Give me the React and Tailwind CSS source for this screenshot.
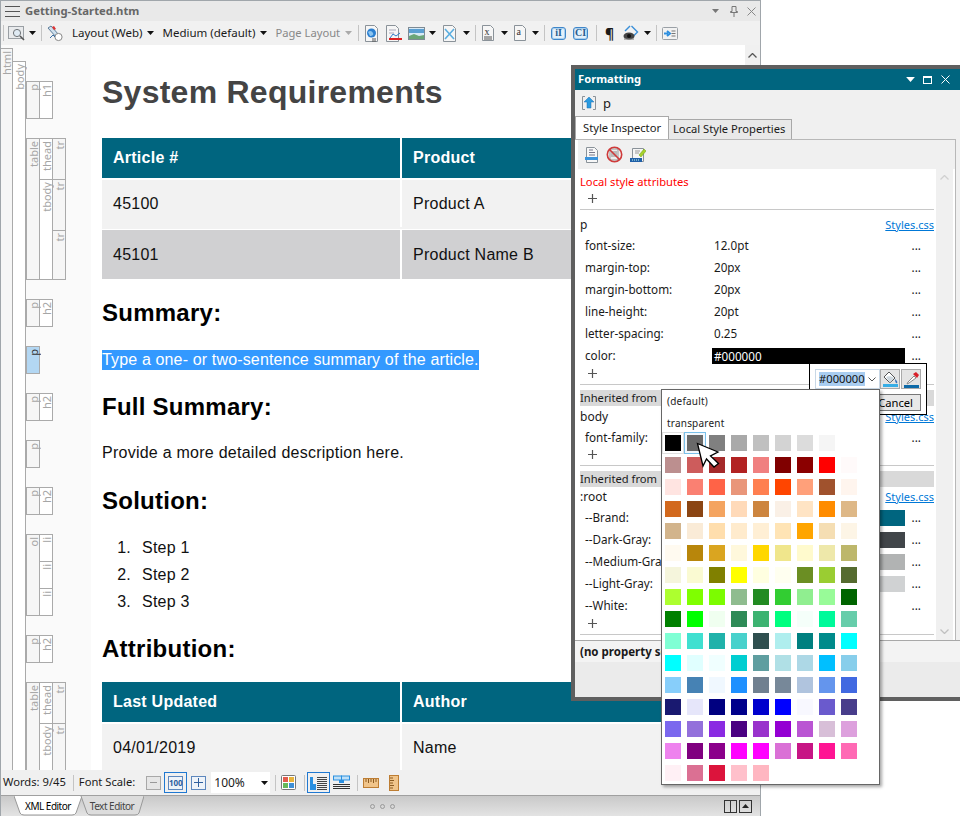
import React from "react";

const ui = "font-['Noto_Sans',sans-serif]";
const doc = "font-['Liberation_Sans',Arial,sans-serif]";

const swatches = [
  "#000000", "#696969", "#808080", "#a9a9a9", "#c0c0c0", "#d3d3d3", "#dcdcdc", "#f5f5f5", "#ffffff",
  "#bc8f8f", "#cd5c5c", "#a52a2a", "#b22222", "#f08080", "#800000", "#8b0000", "#ff0000", "#fffafa",
  "#ffe4e1", "#fa8072", "#ff6347", "#e9967a", "#ff7f50", "#ff4500", "#ffa07a", "#a0522d", "#fff5ee",
  "#d2691e", "#8b4513", "#f4a460", "#ffdab9", "#cd853f", "#faf0e6", "#ffe4c4", "#ff8c00", "#deb887",
  "#d2b48c", "#faebd7", "#ffdead", "#ffebcd", "#ffefd5", "#ffe4b5", "#ffa500", "#f5deb3", "#fdf5e6",
  "#fffaf0", "#b8860b", "#daa520", "#fff8dc", "#ffd700", "#f0e68c", "#fffacd", "#eee8aa", "#bdb76b",
  "#f5f5dc", "#fafad2", "#808000", "#ffff00", "#ffffe0", "#fffff0", "#6b8e23", "#9acd32", "#556b2f",
  "#adff2f", "#7fff00", "#7cfc00", "#8fbc8f", "#228b22", "#32cd32", "#90ee90", "#98fb98", "#006400",
  "#008000", "#00ff00", "#f0fff0", "#2e8b57", "#3cb371", "#00ff7f", "#f5fffa", "#00fa9a", "#66cdaa",
  "#7fffd4", "#40e0d0", "#20b2aa", "#48d1cc", "#2f4f4f", "#afeeee", "#008080", "#008b8b", "#00ffff",
  "#00ffff", "#e0ffff", "#f0ffff", "#00ced1", "#5f9ea0", "#b0e0e6", "#add8e6", "#00bfff", "#87ceeb",
  "#87cefa", "#4682b4", "#f0f8ff", "#1e90ff", "#708090", "#778899", "#b0c4de", "#6495ed", "#4169e1",
  "#191970", "#e6e6fa", "#000080", "#00008b", "#0000cd", "#0000ff", "#f8f8ff", "#6a5acd", "#483d8b",
  "#7b68ee", "#9370db", "#8a2be2", "#4b0082", "#9932cc", "#9400d3", "#ba55d3", "#d8bfd8", "#dda0dd",
  "#ee82ee", "#800080", "#8b008b", "#ff00ff", "#ff00ff", "#da70d6", "#c71585", "#ff1493", "#ff69b4",
  "#fff0f5", "#db7093", "#dc143c", "#ffc0cb", "#ffb6c1",
];

const Caret = ({ className = "", color = "#111" }) => (
  <svg width="7" height="4" viewBox="0 0 7 4" className={`shrink-0 ${className}`}>
    <path d="M0 0h7L3.5 4z" fill={color} />
  </svg>
);

const Sep = ({ className = "" }) => <div className={`w-px h-[16px] shrink-0 bg-[#c4c4c4] ${className}`} />;

const Paper = ({ children, w = 13, h = 17, stroke = "#8a9299" }) => (
  <svg width={w} height={h} viewBox={`0 0 ${w} ${h}`}>
    <path d={`M.5.5h${w - 4}l3 3v${h - 4}h-${w - 1}z`} fill="#f6f6f6" stroke={stroke} />
    {children}
  </svg>
);

// main toolbar icons
const PreviewIcon = () => (
  <svg width="17" height="15" viewBox="0 0 17 15">
    <rect x=".5" y=".5" width="15" height="12" fill="#e8eaec" stroke="#9a9fa4" />
    <circle cx="9" cy="7" r="3.6" fill="#dfeaf3" stroke="#6f7478" />
    <path d="M12 10l4 4" stroke="#555" strokeWidth="1.6" />
  </svg>
);
const WandIcon = () => (
  <svg width="17" height="17" viewBox="0 0 17 17">
    <path d="M1 3l3-2 8 9-3 2z" fill="#cfe0ee" stroke="#5d7d9a" />
    <path d="M5 2l2-1 2 3-2 1z" fill="#d33" />
    <circle cx="11.5" cy="12" r="3.6" fill="#fff" stroke="#888" />
    <path d="M3 13l3-3 2 2" stroke="#3b6fa5" fill="none" />
  </svg>
);
const GlobeDoc = () => (
  <svg width="14" height="17" viewBox="0 0 14 17">
    <path d="M.5.5h9l3 3v13H.5z" fill="#f6f6f6" stroke="#8a9299" />
    <circle cx="6.5" cy="8" r="4.5" fill="#2b7fd0" />
    <path d="M3 7c2-2 4-1 5 1s-1 3-3 3" fill="#8cc4ef" />
    <path d="M7 14h4m-4 2h4" stroke="#555" />
  </svg>
);
const ChartDoc = () => (
  <svg width="17" height="17" viewBox="0 0 17 17">
    <path d="M.5.5h9l3 3v13H.5z" fill="#f6f6f6" stroke="#8a9299" />
    <path d="M3 5h7M3 8h5" stroke="#aab" />
    <path d="M4 13l3-4 3 2 4-3" fill="none" stroke="#2f7bc8" />
    <path d="M3 14h13" stroke="#d22" strokeWidth="2" />
  </svg>
);
const ImageIcon = () => (
  <svg width="17" height="13" viewBox="0 0 17 13">
    <rect x=".5" y=".5" width="16" height="12" fill="#d6e9f6" stroke="#7d8a94" />
    <path d="M1 2h15v4H1z" fill="#5a9fd2" />
    <path d="M1 12V9l5-2 5 2 5-1v4z" fill="#6aa578" />
  </svg>
);
const BrokenImg = () => (
  <Paper>
    <path d="M2 4l9 10M11 4l-9 10" stroke="#5aaee0" strokeWidth="1.600" />
  </Paper>
);
const DocLetter = ({ t }) => (
  <svg width="12" height="16" viewBox="0 0 12 16">
    <path d="M.5.5h8l3 3v12H.5z" fill="#f6f6f6" stroke="#8a9299" />
    <text x="2.4" y="10" fontSize="10" fontFamily="'Liberation Serif',serif" fill="#333">{t}</text>
    {t === "x" && <path d="M2 12h8m-8 2h8" stroke="#555" />}
  </svg>
);
const BlueBox = ({ t }) => (
  <div className="w-[15px] h-[13px] rounded-[3px] border border-[#3f86c9] bg-[#e4f0fa] shadow-[inset_0_0_0_1px_#a9d0ef] flex items-center justify-center text-[10px] leading-none font-bold text-[#2a5d8f] font-['Liberation_Serif',serif]">
    {t}
  </div>
);
const EyeDiamond = () => (
  <svg width="16" height="17" viewBox="0 0 16 17">
    <path d="M8.5 1l6 6-4 4" fill="none" stroke="#3b8fd8" strokeWidth="1.4" />
    <path d="M7 1L2 6" fill="none" stroke="#3b8fd8" strokeWidth="1.4" />
    <ellipse cx="6" cy="11" rx="5.5" ry="3.6" fill="#444" />
    <circle cx="6" cy="11" r="2" fill="#111" />
    <path d="M1 14h10" stroke="#777" />
  </svg>
);
const ArrowList = () => (
  <svg width="16" height="13" viewBox="0 0 16 13">
    <rect x=".5" y=".5" width="15" height="12" rx="1" fill="#f2f2f2" stroke="#9aa0a6" />
    <path d="M2 6.5h4M5 4l3 2.5L5 9" fill="none" stroke="#2d8fe0" strokeWidth="2" />
    <path d="M9.5 4h4m-4 2.5h4M9.5 9h4" stroke="#777" />
  </svg>
);

// formatting panel icons
const UpIcon = () => (
  <svg width="14" height="15" viewBox="0 0 14 15">
    <path d="M3 .5H.5v13H3M11 .5h2.500v13H11" fill="none" stroke="#8a9299" />
    <path d="M7 1l5 5H9v6H5V6H2z" fill="#2a9be0" stroke="#1f6fb0" strokeWidth=".5" />
  </svg>
);
const SheetIcon = () => (
  <svg width="14" height="16" viewBox="0 0 14 16">
    <path d="M1.500.5h8l3 3v12h-11z" fill="#f7f7f7" stroke="#8a9299" />
    <path d="M4 3h4M4 5.500h6M4 8h6" stroke="#778" />
    <rect y="10" width="13" height="3" fill="#3a93dc" />
  </svg>
);
const NoIcon = () => (
  <svg width="17" height="17" viewBox="0 0 17 17">
    <path d="M4 3h8v11H4z" fill="#eee" stroke="#999" />
    <path d="M5 6h6M5 8h6M5 10h6" stroke="#888" />
    <circle cx="8.500" cy="8.500" r="7.200" fill="none" stroke="#cf3a3a" strokeWidth="1.600" />
    <path d="M3.500 3.500l10 10" stroke="#cf3a3a" strokeWidth="1.600" />
  </svg>
);
const EditIcon = () => (
  <svg width="16" height="16" viewBox="0 0 16 16">
    <path d="M2.500 1.500h11v13h-11z" fill="#f5f5f5" stroke="#8a9299" />
    <path d="M5 4h5M5 6h4" stroke="#999" />
    <path d="M9 8l5-6 2 2-5 6z" fill="#a7d22c" stroke="#6a9a12" strokeWidth=".5" />
    <rect y="11" width="12" height="4" fill="#1f5fa8" />
    <path d="M2 13h8" stroke="#cfe" strokeDasharray="1 1" />
  </svg>
);
const Plus = () => (
  <svg width="11" height="11" viewBox="0 0 11 11">
    <path d="M5.500 1v9M1 5.500h9" stroke="#555" strokeWidth="1.200" />
  </svg>
);
const PaintIcon = () => (
  <svg width="17" height="17" viewBox="0 0 17 17">
    <path d="M7 1l6 6-5 5-6-6z" fill="#fff" stroke="#555" />
    <path d="M4 6c2-1 6-1 8 1l-4 5z" fill="#cfd8df" />
    <path d="M13 8c2 2 3 3 2 4s-2-1-2-4z" fill="#3a74b8" />
    <rect x="1" y="13" width="15" height="3" fill="#38aee6" />
  </svg>
);
const DropperIcon = () => (
  <svg width="17" height="17" viewBox="0 0 17 17">
    <path d="M10 3l3-2 3 3-2 3z" fill="#d8202a" />
    <path d="M11 5l2 2-7 5-2 1 1-2z" fill="#fff" stroke="#8a8a8a" />
    <rect x="1" y="14" width="15" height="3" fill="#0e6aa8" />
  </svg>
);
const Cursor = () => (
  <svg width="25" height="26" viewBox="0 0 25 26" className="absolute left-[696px] top-[442px]">
    <path d="M1.500 1.500L22 10l-7.500 4 8 7.500-4.500 3.500-7.500-8-3.500 7z" fill="#fff" stroke="#000" strokeWidth="1.300" />
  </svg>
);

// status bar icons
const MiniBtn = ({ children, tone = "border-[#5d87bd]", fill = "bg-[#eef3f9]" }) => (
  <div className={`w-[15px] h-[14px] border ${tone} ${fill} flex items-center justify-center`}>{children}</div>
);
const PaletteIcon = () => (
  <svg width="15" height="15" viewBox="0 0 15 15">
    <rect x=".5" y=".5" width="14" height="14" rx="1" fill="#fff" stroke="#777" />
    <rect x="2" y="2" width="5" height="5" fill="#e25b4e" />
    <rect x="8" y="2" width="5" height="5" fill="#e8b33a" />
    <rect x="2" y="8" width="5" height="5" fill="#66b85a" />
    <rect x="8" y="8" width="5" height="5" fill="#3f8fd6" />
  </svg>
);
const LeftLayout = () => (
  <svg width="17" height="14" viewBox="0 0 17 14">
    <path d="M0 1h3v13H0z" fill="#2a8fe0" />
    <path d="M3 8h3v6H3z" fill="#2a8fe0" />
    <path d="M7 1.500h10M7 3.500h10M7 5.500h10M7 7.500h10M7 9.500h10M7 11.500h10M7 13.500h10" stroke="#444" />
  </svg>
);
const TopLayout = () => (
  <svg width="17" height="15" viewBox="0 0 17 15">
    <rect x=".5" y="1" width="8" height="4" fill="#bfe0f7" stroke="#2a8fe0" />
    <rect x="8.500" y="1" width="8" height="4" fill="#bfe0f7" stroke="#2a8fe0" />
    <path d="M6 5h5v3H6z" fill="#2a8fe0" />
    <path d="M0 9.500h17M0 11.500h17M0 13.500h17" stroke="#333" />
  </svg>
);
const RulerH = () => (
  <svg width="16" height="10" viewBox="0 0 16 10">
    <rect x=".5" y=".5" width="15" height="9" fill="#f0c48a" stroke="#bd7d33" />
    <path d="M3 1v3M5.500 1v4M8 1v3M10.500 1v4M13 1v3" stroke="#8a5a20" />
  </svg>
);
const RulerV = () => (
  <svg width="10" height="16" viewBox="0 0 10 16">
    <rect x=".5" y=".5" width="9" height="15" fill="#f0c48a" stroke="#bd7d33" />
    <path d="M1 3h3M1 5.500h4M1 8h3M1 10.500h4M1 13h3" stroke="#8a5a20" />
  </svg>
);

// element tree in the left gutter
const VLabel = ({ children, active }) => (
  <span className={`block self-start [writing-mode:vertical-rl] rotate-180 text-[11px] leading-[11px] mt-[2px] ${ui} ${active ? "text-[#333]" : "text-[#a6a6a6]"}`}>
    {children}
  </span>
);

const Tag = ({ label, h, kids, depth = 0, active }) => (
  <div className="flex">
    <div
      className={`w-[13px] shrink-0 flex justify-center border-r border-b border-[#aaaaaa] ${
        active ? "bg-[#b3d7f3]" : depth % 2 ? "bg-white" : "bg-[#f6f6f6]"
      } ${h || ""}`}
    >
      <VLabel active={active}>{label}</VLabel>
    </div>
    {kids && (
      <div className="flex flex-col">
        {kids.map((k, i) => (
          <Tag key={i} {...k} depth={depth + 1} />
        ))}
      </div>
    )}
  </div>
);

const Group = (props) => (
  <div className="self-start border-l border-t border-[#aaaaaa]">
    <Tag {...props} />
  </div>
);

const Gutter = () => (
  <div className="w-[90px] shrink-0 bg-[#fafafa] flex items-stretch pt-[3px] overflow-hidden">
    <div className="w-[12px] bg-[#f6f6f6] border-t border-r border-[#aaaaaa] flex justify-center shrink-0">
      <VLabel>html</VLabel>
    </div>
    <div className="flex flex-1 mt-[13px] min-h-0">
      <div className="w-[13px] bg-white border-t border-r border-[#aaaaaa] flex justify-center shrink-0">
        <VLabel>body</VLabel>
      </div>
      <div className="flex flex-col gap-[19px] pt-5">
        <Group label="p" kids={[{ label: "h1", h: "h-[37px]" }]} />
        <Group
          label="table"
          kids={[
            { label: "thead", kids: [{ label: "tr", h: "h-[41px]" }] },
            { label: "tbody", kids: [{ label: "tr", h: "h-[51px]" }, { label: "tr", h: "h-[49px]" }] },
          ]}
        />
        <Group label="p" kids={[{ label: "h2", h: "h-[27px]" }]} />
        <Group label="p" active h="h-[27px]" />
        <Group label="p" kids={[{ label: "h2", h: "h-[27px]" }]} />
        <Group label="p" h="h-[27px]" />
        <Group label="p" kids={[{ label: "h2", h: "h-[27px]" }]} />
        <Group label="ol" kids={[{ label: "li", h: "h-[27px]" }, { label: "li", h: "h-[27px]" }, { label: "li", h: "h-[27px]" }]} />
        <Group label="p" kids={[{ label: "h2", h: "h-[27px]" }]} />
        <Group
          label="table"
          kids={[
            { label: "thead", kids: [{ label: "tr", h: "h-[41px]" }] },
            { label: "tbody", kids: [{ label: "tr", h: "h-[60px]" }] },
          ]}
        />
      </div>
    </div>
  </div>
);

const HeadRow = ({ a, b }) => (
  <div className="flex w-[700px] h-10 mb-[2px] text-white font-bold text-[16px] bg-[#00657f]">
    <div className="w-[298px] shrink-0 pl-[11px] flex items-center">{a}</div>
    <div className="w-[2px] shrink-0 bg-white" />
    <div className="w-[400px] shrink-0 pl-[11px] flex items-center">{b}</div>
  </div>
);
const BodyRow = ({ a, b, tone }) => (
  <div className={`flex w-[700px] h-[49px] mb-px text-[16px] text-[#111] ${tone}`}>
    <div className="w-[298px] shrink-0 pl-[11px] flex items-center">{a}</div>
    <div className="w-[2px] shrink-0 bg-white" />
    <div className="w-[400px] shrink-0 pl-[11px] flex items-center">{b}</div>
  </div>
);

const H2 = ({ className, children }) => (
  <h2 className={`h-[28px] leading-[28px] text-[24px] font-bold text-black tracking-[0.25px] ${className}`}>{children}</h2>
);

const Step = ({ n }) => (
  <li className="h-[27px] leading-[27px] flex">
    <span className="w-[29px] text-right mr-[11px]">{n}.</span>
    Step {n}
  </li>
);

const Document = () => (
  <div className={`flex-1 min-w-0 overflow-hidden bg-white pl-[11px] ${doc} tracking-[0.25px]`}>
    <h1 className="mt-[27px] h-10 leading-10 text-[32px] font-bold text-[#444444] tracking-[0.25px]">System Requirements</h1>
    <div className="mt-[26px]">
      <HeadRow a="Article #" b="Product" />
      <BodyRow a="45100" b="Product A" tone="bg-[#f2f2f2] pb-[2px]" />
      <BodyRow a="45101" b="Product Name B" tone="bg-[#d0d0d2]" />
    </div>
    <H2 className="mt-5">Summary:</H2>
    <p className="mt-[23px] h-5 leading-5 text-[16px]">
      <span className="inline-block h-5 bg-[#3399ff] text-white tracking-[0.15px]">Type a one- or two-sentence summary of the article.</span>
    </p>
    <H2 className="mt-[23px]">Full Summary:</H2>
    <p className="mt-[22px] h-5 leading-5 text-[16px] text-[#111]">Provide a more detailed description here.</p>
    <H2 className="mt-6">Solution:</H2>
    <ol className="mt-[19px] text-[16px] text-[#111]">
      <Step n={1} />
      <Step n={2} />
      <Step n={3} />
    </ol>
    <H2 className="mt-5">Attribution:</H2>
    <div className="mt-[19px]">
      <HeadRow a="Last Updated" b="Author" />
      <BodyRow a="04/01/2019" b="Name" tone="bg-[#f2f2f2] pb-[2px]" />
    </div>
  </div>
);

const MainWindow = () => (
  <div className={`w-[761px] h-[816px] flex flex-col border-x border-t border-[#a0a6ab] ${ui}`}>
    <div className="h-[20px] shrink-0 bg-[#e9e9e9] flex items-center">
      <div className="ml-[4px] w-[15px] flex flex-col gap-[4px] pt-px">
        <div className="h-px bg-[#555]" />
        <div className="h-px bg-[#555]" />
        <div className="h-px bg-[#555]" />
      </div>
      <span className="ml-[5px] text-[11.3px] font-bold text-[#666]">Getting-Started.htm</span>
      <div className="ml-auto flex items-center">
        <Caret color="#777" className="mr-[11px]" />
        <svg width="8" height="11" viewBox="0 0 8 11" className="mr-[9px]">
          <path d="M2 .5h4v5h1.500v1H.5v-1H2zM4 6.500V11" fill="none" stroke="#777" />
        </svg>
        <svg width="9" height="9" viewBox="0 0 9 9" className="mr-[4px]">
          <path d="M.5.500l8 8m0-8l-8 8" stroke="#888" />
        </svg>
      </div>
    </div>
    <div className="h-6 shrink-0 bg-[#f1f1f1] flex items-center text-[11.5px] text-[#1a1a1a] whitespace-nowrap">
      <Sep className="ml-[2px]" />
      <div className="ml-[4px]"><PreviewIcon /></div>
      <Caret className="ml-[4px]" />
      <Sep className="ml-[5px]" />
      <div className="ml-[5px]"><WandIcon /></div>
      <span className="ml-[8px]">Layout (Web)</span>
      <Caret className="ml-[5px]" />
      <span className="ml-[8px]">Medium (default)</span>
      <Caret className="ml-[5px]" />
      <span className="ml-[8px] text-[11.2px] text-[#888]">Page Layout</span>
      <Caret color="#aaa" className="ml-[5px]" />
      <Sep className="ml-[6px]" />
      <div className="ml-[6px]"><GlobeDoc /></div>
      <div className="ml-[7px]"><ChartDoc /></div>
      <div className="ml-[5px]"><ImageIcon /></div>
      <Caret className="ml-[4px]" />
      <div className="ml-[7px]"><BrokenImg /></div>
      <Caret className="ml-[7px]" />
      <Sep className="ml-[5px]" />
      <div className="ml-[6px]"><DocLetter t="x" /></div>
      <Caret className="ml-[7px]" />
      <div className="ml-[6px]"><DocLetter t="a" /></div>
      <Caret className="ml-[6px]" />
      <Sep className="ml-[5px]" />
      <div className="ml-[6px]"><BlueBox t="iI" /></div>
      <div className="ml-[7px]"><BlueBox t="CI" /></div>
      <Sep className="ml-[8px]" />
      <span className="ml-[8px] text-[14px] font-bold">¶</span>
      <div className="ml-[9px]"><EyeDiamond /></div>
      <Caret className="ml-[5px]" />
      <Sep className="ml-[5px]" />
      <div className="ml-[5px]"><ArrowList /></div>
    </div>
    <div className="flex-1 min-h-0 flex bg-white">
      <Gutter />
      <Document />
      <div className="w-[15px] shrink-0 bg-[#f0f0f0] flex justify-center pt-[8px]">
        <svg width="9" height="5" viewBox="0 0 9 5">
          <path d="M.5 4.500l4-4 4 4" fill="none" stroke="#555" strokeWidth="1.300" />
        </svg>
      </div>
    </div>
    <div className="h-[25px] shrink-0 bg-[#f0f0f0] flex items-center text-[11.2px] text-[#1a1a1a] whitespace-nowrap">
      <span className="ml-[2px]">Words: 9/45</span>
      <Sep className="ml-[7px]" />
      <span className="ml-[5px]">Font Scale:</span>
      <div className="ml-[11px]">
        <MiniBtn tone="border-[#a8a8a8]" fill="bg-[#e6e6e6]">
          <div className="w-[7px] h-px bg-[#999]" />
        </MiniBtn>
      </div>
      <div className="ml-[3px] w-[23px] h-[21px] border border-[#1f78d1] flex items-center justify-center">
        <MiniBtn><span className="text-[8px] leading-none font-bold text-[#2f5f9e]">100</span></MiniBtn>
      </div>
      <div className="ml-[4px]">
        <MiniBtn>
          <svg width="9" height="9" viewBox="0 0 9 9"><path d="M4.500 0v9M0 4.500h9" stroke="#2f5f9e" /></svg>
        </MiniBtn>
      </div>
      <div className="ml-[5px] w-[59px] h-[21px] bg-white flex items-center pl-[3px] text-[12px]">
        100%
        <Caret className="ml-auto mr-[2px]" />
      </div>
      <Sep className="ml-[5px]" />
      <div className="ml-[5px]"><PaletteIcon /></div>
      <Sep className="ml-[8px]" />
      <div className="ml-[2px] w-[23px] h-[21px] border border-[#1f78d1] flex items-center justify-center"><LeftLayout /></div>
      <div className="ml-[3px]"><TopLayout /></div>
      <Sep className="ml-[7px]" />
      <div className="ml-[5px]"><RulerH /></div>
      <div className="ml-[10px]"><RulerV /></div>
    </div>
    <div className="h-[21px] shrink-0 relative flex items-center border-t border-[#a0a0a0] bg-gradient-to-b from-[#c9c9c9] to-[#e3e3e3] text-[10px] tracking-[-0.5px]">
      <div className="relative ml-[13px] w-[68px] h-[20px] flex items-center justify-center">
        <svg width="68" height="20" viewBox="0 0 68 20" className="absolute inset-0">
          <path d="M0 0l6 17q1 2 4 2h48q3 0 4-2l6-17" fill="#fff" stroke="#999" />
        </svg>
        <span className="relative text-black">XML Editor</span>
      </div>
      <div className="relative -ml-[2px] w-[64px] h-[20px] flex items-center justify-center">
        <svg width="64" height="20" viewBox="0 0 64 20" className="absolute inset-0">
          <path d="M1 0l6 17q1 2 4 2h44q3 0 4-2l5-17" fill="#dcdcdc" stroke="#999" />
        </svg>
        <span className="relative text-[#444]">Text Editor</span>
      </div>
      <div className="ml-[226px] flex gap-[5px]">
        <div className="w-[5px] h-[5px] rounded-full border border-[#999]" />
        <div className="w-[5px] h-[5px] rounded-full border border-[#999]" />
        <div className="w-[5px] h-[5px] rounded-full border border-[#999]" />
      </div>
      <div className="ml-auto mr-[8px] flex gap-[2px]">
        <div className="w-[13px] h-[13px] border border-[#333] flex justify-center"><div className="w-px h-full bg-[#333]" /></div>
        <div className="w-[13px] h-[13px] border border-[#333] flex items-center justify-center">
          <svg width="7" height="4" viewBox="0 0 7 4"><path d="M3.500 0L7 4H0z" fill="#222" /></svg>
        </div>
      </div>
    </div>
  </div>
);

const Prop = ({ label, value, swatch }) => (
  <div className="h-[22px] flex items-center pl-[5px] pr-[13px] text-[11.7px]">
    <div className="w-[127px] shrink-0 whitespace-nowrap">{label}</div>
    {swatch ? (
      <div className={`w-[193px] h-4 ${swatch}`} />
    ) : value === "#000000" ? (
      <div className="w-[193px] h-4 bg-black text-white pl-[2px] leading-4">{value}</div>
    ) : (
      <div className="w-[193px] pl-[2px]">{value}</div>
    )}
    <div className="ml-auto leading-none">...</div>
  </div>
);

const Hr = () => <div className="mt-[4px] h-px bg-[#c8c8c8]" />;
const PlusRow = ({ className = "" }) => (
  <div className={`h-[13px] pl-[7px] flex items-center ${className}`}><Plus /></div>
);
const Rule = ({ label, link }) => (
  <div className="h-5 flex items-center justify-between">
    <span>{label}</span>
    {link && <span className="text-[11px] leading-[14px] text-[#0078d7] underline">Styles.css</span>}
  </div>
);
const Inherited = () => (
  <div className="mt-[5px] h-4 bg-[#d9d9d9] flex items-center text-[11.200px]">Inherited from</div>
);

const FormattingPanel = () => (
  <div className={`absolute left-[571px] top-[65px] w-[389px] h-[636px] flex flex-col border-l-4 border-t-4 border-b-4 border-[#5f5f5f] bg-[#f0f0f0] text-[12px] text-[#1a1a1a] ${ui}`}>
    <div className="h-[21px] shrink-0 bg-[#00657f] flex items-center pl-[3px] text-white font-bold text-[11.2px]">
      Formatting
      <div className="ml-auto flex items-center mr-[10px]">
        <Caret color="#fff" className="w-[9px] h-[5px] mr-[8px]" />
        <div className="w-[9px] h-[8px] border border-white border-t-2 mr-[9px]" />
        <svg width="9" height="9" viewBox="0 0 9 9">
          <path d="M.5.500l8 8m0-8l-8 8" stroke="#fff" />
        </svg>
      </div>
    </div>
    <div className="h-[27px] shrink-0 flex items-center pl-[7px] text-[13px]">
      <UpIcon />
      <span className="ml-[7px]">p</span>
    </div>
    <div className="h-[22px] shrink-0 flex items-end relative z-10 text-[11.200px] whitespace-nowrap">
      <div className="w-[94px] h-[23px] bg-white border border-b-0 border-[#a8a8a8] pl-[7px] flex items-center">Style Inspector</div>
      <div className="w-[123px] h-[20px] bg-[#e9e9e9] border border-l-0 border-b-0 border-[#a8a8a8] pl-[4px] flex items-center">Local Style Properties</div>
    </div>
    <div className="flex-1 min-h-0 flex flex-col border-t border-r border-[#b8b8b8] bg-white pl-[3px] mr-[4px]">
      <div className="h-[29px] shrink-0 bg-[#f0f0f0] flex items-center pl-[7px]">
        <SheetIcon />
        <div className="ml-[7px]"><NoIcon /></div>
        <div className="ml-[7px]"><EditIcon /></div>
      </div>
      <div className="flex-1 min-h-0 flex">
        <div className="w-[358px] shrink-0 overflow-hidden pt-[3px] pl-[2px] pr-[2px]">
          <div className="h-5 flex items-center text-[#ff0000] text-[11.200px]">Local style attributes</div>
          <PlusRow />
          <Hr />
          <div className="mt-[5px]"><Rule label="p" link /></div>
          <Prop label="font-size:" value="12.0pt" />
          <Prop label="margin-top:" value="20px" />
          <Prop label="margin-bottom:" value="20px" />
          <Prop label="line-height:" value="20pt" />
          <Prop label="letter-spacing:" value="0.25" />
          <Prop label="color:" value="#000000" />
          <PlusRow />
          <Hr />
          <Inherited />
          <div className="mt-px"><Rule label="body" link /></div>
          <Prop label="font-family:" value="" />
          <PlusRow className="-mt-px" />
          <Hr />
          <Inherited />
          <Rule label=":root" link />
          <Prop label="--Brand:" swatch="bg-[#00657f]" />
          <Prop label="--Dark-Gray:" swatch="bg-[#414549]" />
          <Prop label="--Medium-Gray:" swatch="bg-[#b1b3b3]" />
          <Prop label="--Light-Gray:" swatch="bg-[#d0d2d3]" />
          <Prop label="--White:" swatch="bg-white" />
          <PlusRow />
          <Hr />
        </div>
        <div className="w-[17px] shrink-0 bg-[#f0f0f0] flex flex-col items-center justify-between py-[6px]">
          <svg width="9" height="5" viewBox="0 0 9 5"><path d="M.5 4.500l4-4 4 4" fill="none" stroke="#d0d0d0" strokeWidth="1.300" /></svg>
          <svg width="9" height="5" viewBox="0 0 9 5"><path d="M.5.500l4 4 4-4" fill="none" stroke="#c0c0c0" strokeWidth="1.300" /></svg>
        </div>
      </div>
    </div>
    <div className="h-[22px] shrink-0 bg-[#f3f3f3] border-t border-[#a8a8a8] pl-[5px] flex items-center font-bold text-[11.500px]">(no property selected)</div>
    <div className="h-[35px] shrink-0 bg-[#ebebeb]" />
  </div>
);

const ColorInput = () => (
  <div className={`absolute left-[809px] top-[363px] w-[118px] h-[52px] bg-white border border-black ${ui} text-[11.200px]`}>
    <div className="flex mt-[5px] ml-[5px] h-5">
      <div className="w-[65px] border border-[#c9d8e6] flex items-center pl-[3px]">
        <span className="bg-[#a9cdf0] text-[#111] leading-[14px]">#000000</span>
        <svg width="8" height="5" viewBox="0 0 8 5" className="ml-auto mr-[3px]"><path d="M.5.500l3.500 3.500 3.500-3.500" fill="none" stroke="#555" /></svg>
      </div>
      <div className="w-[20px] border border-[#aaa] bg-[#e4e4e4] flex items-center justify-center"><PaintIcon /></div>
      <div className="ml-px w-[20px] border border-[#aaa] bg-[#e4e4e4] flex items-center justify-center"><DropperIcon /></div>
    </div>
    <div className="ml-auto mr-[5px] mt-[5px] w-[46px] h-[17px] border border-[#777] bg-[#e8e8e8] flex items-center justify-end pr-[7px] leading-none">Cancel</div>
  </div>
);

const ColorMenu = () => (
  <div className={`absolute left-[661px] top-[389px] w-[219px] h-[396px] bg-white border border-[#666] shadow-[2px_2px_3px_rgba(0,0,0,0.35)] ${ui}`}>
    <div className="h-[22px] pl-[5px] pt-[4px] text-[10px] leading-[14px] tracking-[0.2px] text-[#222]">(default)</div>
    <div className="h-[21px] pl-[5px] pt-[4px] text-[10px] leading-[14px] tracking-[0.2px] text-[#222]">transparent</div>
    <div className="mt-[2px] ml-[3px] grid grid-cols-[repeat(9,16px)] gap-[6px]">
      {swatches.map((c, i) => (
        <div
          key={i}
          style={{ backgroundColor: c }}
          className={`h-4 ${
            i === 0
              ? "shadow-[0_0_0_2px_#fff,0_0_0_3px_#e0e0e0]"
              : i === 1
              ? "shadow-[0_0_0_2px_#f2f8fd,0_0_0_3px_#7ac0ea]"
              : ""
          }`}
        />
      ))}
    </div>
  </div>
);

export default function App() {
  return (
    <div className="relative w-[960px] h-[816px] bg-white overflow-hidden">
      <MainWindow />
      <FormattingPanel />
      <ColorInput />
      <ColorMenu />
      <Cursor />
    </div>
  );
}
